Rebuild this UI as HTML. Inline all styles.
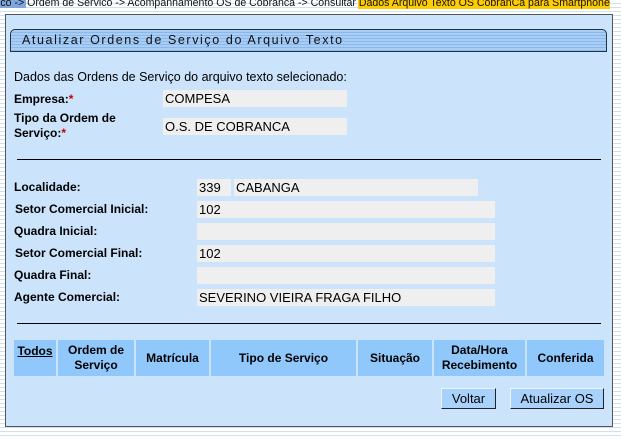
<!DOCTYPE html>
<html><head><meta charset="utf-8"><style>
*{margin:0;padding:0;box-sizing:border-box}
body{width:621px;height:439px;overflow:hidden;position:relative;font-family:"Liberation Sans",Arial,sans-serif;font-size:12px;color:#000;
background:repeating-linear-gradient(to bottom,#fff 0,#fff 3px,#cfe0f0 3px,#cfe0f0 4px);}
.a{position:absolute;white-space:nowrap}
.in{position:absolute;background:#efefef;height:17px;line-height:17px;padding-left:2px;font-size:13px}
.lb{position:absolute;font-weight:bold;font-size:12px;white-space:nowrap}
.r{color:#c00}
.hr{position:absolute;left:17px;width:584px;height:1px;background:#000}
.th{position:absolute;top:340px;height:36px;background:#90c8fb;font-weight:bold;font-size:12px;line-height:15px;text-align:center;display:flex;align-items:center;justify-content:center;white-space:nowrap}
.btn{position:absolute;height:21px;background:#a8d2fb;border:1px solid #333;border-color:#eaf4ff #222 #222 #eaf4ff;font-size:13px;text-align:center;line-height:19px}
</style></head><body>
<div class="a" style="left:358px;top:0;width:252px;height:9px;background:#ffcc00"></div>
<div class="a" style="left:0;top:0;width:26px;height:8px;background:#7fa6dd"></div>
<div class="a" style="left:-2px;top:-4px;font-size:11px;line-height:14px;color:#111;transform:scaleX(0.962);transform-origin:0 0">ico -&gt; Ordem de Servico -&gt; Acompanhamento OS de Cobranca -&gt; Consultar Dados Arquivo Texto OS CobranCa para Smartphone</div>
<div class="a" style="left:5px;top:14px;width:608px;height:413px;background:#cbe4fc;border:1px solid #555"></div>
<div class="a" style="left:10px;top:29px;width:597px;height:23px;border:1px solid #234;border-radius:5px 5px 0 0;background:repeating-linear-gradient(to bottom,#a9cdf4 0,#a9cdf4 2px,#8ab9ec 2px,#8ab9ec 3px)"></div>
<div class="a" style="left:22px;top:33px;font-size:12.5px;letter-spacing:1.6px;color:#111">Atualizar Ordens de Serviço do Arquivo Texto</div>
<div class="a" style="left:14px;top:70px;font-size:12.5px">Dados das Ordens de Serviço do arquivo texto selecionado:</div>
<div class="lb" style="left:14px;top:92px">Empresa:<span class="r">*</span></div>
<div class="in" style="left:163px;top:90px;width:184px">COMPESA</div>
<div class="lb" style="left:14px;top:111px;line-height:15px">Tipo da Ordem de<br>Serviço:<span class="r">*</span></div>
<div class="in" style="left:163px;top:118px;width:184px">O.S. DE COBRANCA</div>
<div class="hr" style="top:159px"></div>
<div class="lb" style="left:14px;top:180px">Localidade:</div>
<div class="in" style="left:197px;top:179px;width:34px">339</div>
<div class="in" style="left:234px;top:179px;width:244px">CABANGA</div>
<div class="lb" style="left:15px;top:202px">Setor Comercial Inicial:</div>
<div class="in" style="left:197px;top:201px;width:298px">102</div>
<div class="lb" style="left:14px;top:224px">Quadra Inicial:</div>
<div class="in" style="left:197px;top:223px;width:298px"></div>
<div class="lb" style="left:15px;top:246px">Setor Comercial Final:</div>
<div class="in" style="left:197px;top:245px;width:298px">102</div>
<div class="lb" style="left:14px;top:268px">Quadra Final:</div>
<div class="in" style="left:197px;top:267px;width:298px"></div>
<div class="lb" style="left:14px;top:290px">Agente Comercial:</div>
<div class="in" style="left:197px;top:289px;width:298px">SEVERINO VIEIRA FRAGA FILHO</div>
<div class="hr" style="top:323px"></div>
<div class="th" style="left:14px;width:42px;align-items:flex-start;padding-top:4px;text-decoration:underline">Todos</div>
<div class="th" style="left:58px;width:76px">Ordem de<br>Serviço</div>
<div class="th" style="left:136px;width:73px">Matrícula</div>
<div class="th" style="left:211px;width:145px">Tipo de Serviço</div>
<div class="th" style="left:358px;width:74px">Situação</div>
<div class="th" style="left:434px;width:91px">Data/Hora<br>Recebimento</div>
<div class="th" style="left:527px;width:77px">Conferida</div>
<div class="btn" style="left:441px;top:388px;width:55px">Voltar</div>
<div class="btn" style="left:510px;top:388px;width:94px">Atualizar OS</div>
</body></html>
